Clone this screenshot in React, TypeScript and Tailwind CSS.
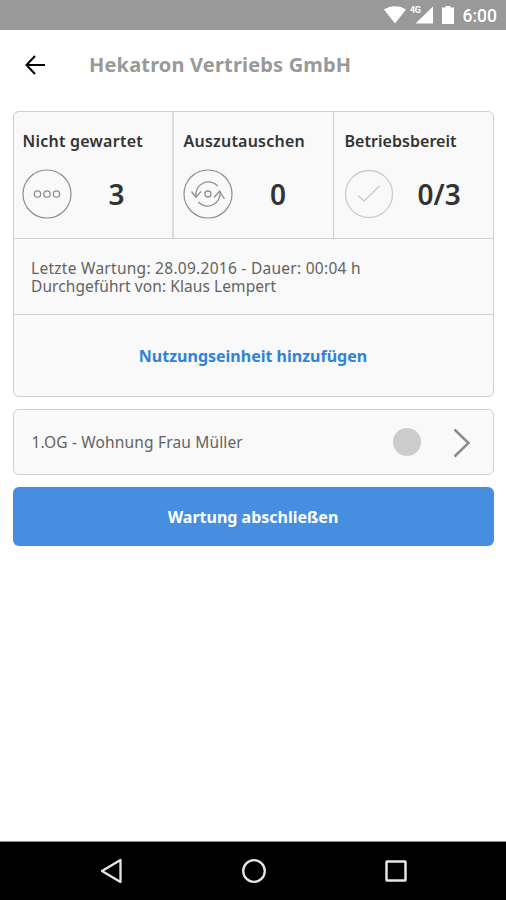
import React from "react";

const stats = [
  {
    label: "Nicht gewartet",
    value: "3",
    icon: <DotsIcon />,
    cell: "w-[160px] pl-[9px] border-r-2 border-[#dcdcdc]",
    labelClass: "tracking-[0.24px]",
    iconClass: "-ml-px mr-[37px]",
  },
  {
    label: "Auszutauschen",
    value: "0",
    icon: <SwapIcon />,
    cell: "w-[160px] pl-[10px] border-r border-[#cfcfcf]",
    labelClass: "tracking-[0.22px]",
    iconClass: "-ml-px mr-[37.500px]",
  },
  {
    label: "Betriebsbereit",
    value: "0/3",
    icon: <CheckIcon />,
    cell: "flex-1 pl-[11px]",
    labelClass: "tracking-[0.04px]",
    iconClass: "-ml-px mr-[24px]",
  },
];

function DotsIcon() {
  return (
    <svg width="50" height="50" viewBox="0 0 50 50" fill="none" stroke="#8f8f8f">
      <circle cx="25" cy="25" r="24" strokeWidth="1.2" />
      <circle cx="15.5" cy="25" r="3.2" strokeWidth="1.3" />
      <circle cx="25" cy="25" r="3.2" strokeWidth="1.3" />
      <circle cx="34.5" cy="25" r="3.2" strokeWidth="1.3" />
    </svg>
  );
}

function SwapIcon() {
  return (
    <svg width="50" height="50" viewBox="0 0 50 50" fill="none" stroke="#8f8f8f">
      <circle cx="25" cy="25" r="24" strokeWidth="1.2" />
      <circle cx="25" cy="25" r="3" strokeWidth="1.3" />
      <path d="M34.7 17A12.6 12.6 0 0 0 13 27.7" strokeWidth="1.3" />
      <path d="M8.5 22.5L13 28.2L18 22.5" strokeWidth="1.3" />
      <path d="M15.3 33A12.6 12.6 0 0 0 37 22.5" strokeWidth="1.3" />
      <path d="M31 28.5L36.6 22L41.4 30" strokeWidth="1.3" />
    </svg>
  );
}

function CheckIcon() {
  return (
    <svg width="50" height="50" viewBox="0 0 50 50" fill="none" stroke="#cccccc">
      <circle cx="25" cy="25" r="23.5" strokeWidth="1.3" />
      <path d="M14 26.5L20 32L35.5 17" strokeWidth="1.5" />
    </svg>
  );
}

function StatusBar() {
  return (
    <div className="relative h-[30px] shrink-0 bg-[#999999] text-white">
      <svg
        className="absolute inset-0"
        width="506"
        height="30"
        viewBox="0 0 506 30"
        fill="#ffffff"
      >
        <path d="M384 9.5C390.500 5 399.500 5 406 9.500L395 23.500Z" />
        <path d="M433 6.500V23.500H415.500Z" />
        <path d="M445.500 6H450.500V7.500H454V24H442V7.500H445.500Z" />
      </svg>
      <span className="absolute left-[410px] top-[5px] bg-[#999999] text-[9px] leading-[10px] font-bold tracking-[-0.3px] font-[Roboto,sans-serif]">
        4G
      </span>
      <span className="absolute right-[9px] top-[5px] text-[17.500px] leading-[22px] font-medium font-[Roboto,sans-serif]">
        6:00
      </span>
    </div>
  );
}

function Header() {
  return (
    <header className="flex h-[69px] shrink-0 items-center pl-[25px]">
      <svg width="21" height="20" viewBox="0 0 21 20" fill="none" stroke="#000000">
        <path d="M10 1L1.500 10L10 19M1.500 10H20" strokeWidth="2" />
      </svg>
      <h1 className="ml-[43px] text-[20px] leading-[28px] font-bold tracking-[0.17px] text-[#999999] whitespace-nowrap">
        Hekatron Vertriebs GmbH
      </h1>
    </header>
  );
}

function NavBar() {
  return (
    <nav className="flex h-[59px] shrink-0 items-center justify-between border-t border-[#8a8a8a] bg-black pl-[100px] pr-[98px]">
      <svg width="24" height="26" viewBox="0 0 24 26" fill="none" stroke="#e6e6e6">
        <path d="M20.500 2V24L2 13Z" strokeWidth="2.300" strokeLinejoin="round" />
      </svg>
      <svg width="26" height="26" viewBox="0 0 26 26" fill="none" stroke="#e6e6e6">
        <circle cx="13" cy="13" r="10.800" strokeWidth="2.300" />
      </svg>
      <svg width="24" height="24" viewBox="0 0 24 24" fill="none" stroke="#e6e6e6">
        <rect x="2.500" y="2.500" width="19" height="19" rx="0.500" strokeWidth="2.500" />
      </svg>
    </nav>
  );
}

export default function App() {
  return (
    <div className="flex h-[900px] w-[506px] flex-col overflow-hidden bg-white font-['Noto_Sans',sans-serif] text-[#333333]">
      <StatusBar />
      <Header />

      <main className="flex flex-1 flex-col gap-[12px] px-[12.500px] pt-[12px]">
        <section className="h-[286px] rounded-md border-[1.500px] border-[#cfcfcf] bg-[#f9f9f9]">
          <div className="flex h-[127px] border-b border-[#cfcfcf]">
            {stats.map((stat) => (
              <div key={stat.label} className={stat.cell}>
                <h2
                  className={`mt-[18px] text-[16px] leading-[22px] font-semibold whitespace-nowrap ${stat.labelClass}`}
                >
                  {stat.label}
                </h2>
                <div className="mt-[17px] flex h-[50px] items-center">
                  <span className={stat.iconClass}>{stat.icon}</span>
                  <span className="text-[28px] leading-[49px] font-semibold">
                    {stat.value}
                  </span>
                </div>
              </div>
            ))}
          </div>

          <div className="flex h-[76px] flex-col justify-center border-b border-[#cfcfcf] pl-[17.500px] text-[15.500px] leading-[18px] text-[#636363]">
            <p className="tracking-[0.27px]">Letzte Wartung: 28.09.2016 - Dauer: 00:04 h</p>
            <p className="tracking-[0.08px]">Durchgeführt von: Klaus Lempert</p>
          </div>

          <button className="flex h-[81px] w-full items-center justify-center text-[16px] font-bold text-[#2f83d8]">
            Nutzungseinheit hinzufügen
          </button>
        </section>

        <section className="flex h-[66px] items-center rounded-md border-[1.500px] border-[#cfcfcf] bg-[#f9f9f9] pl-[18px] pr-[22px]">
          <p className="mt-[2px] flex-1 text-[15.500px] tracking-[0.16px] text-[#636363]">
            1.OG - Wohnung Frau Müller
          </p>
          <span className="h-7 w-7 rounded-full bg-[#cccccc]" />
          <svg
            className="ml-[32px] mt-[2px]"
            width="18"
            height="30"
            viewBox="0 0 18 30"
            fill="none"
            stroke="#8c8c8c"
          >
            <path d="M1.500 1.500L15.500 15L1.500 28.500" strokeWidth="2.500" />
          </svg>
        </section>

        <button className="h-[59px] rounded-md bg-[#468edf] text-[16px] font-bold text-white">
          Wartung abschließen
        </button>
      </main>

      <NavBar />
    </div>
  );
}
